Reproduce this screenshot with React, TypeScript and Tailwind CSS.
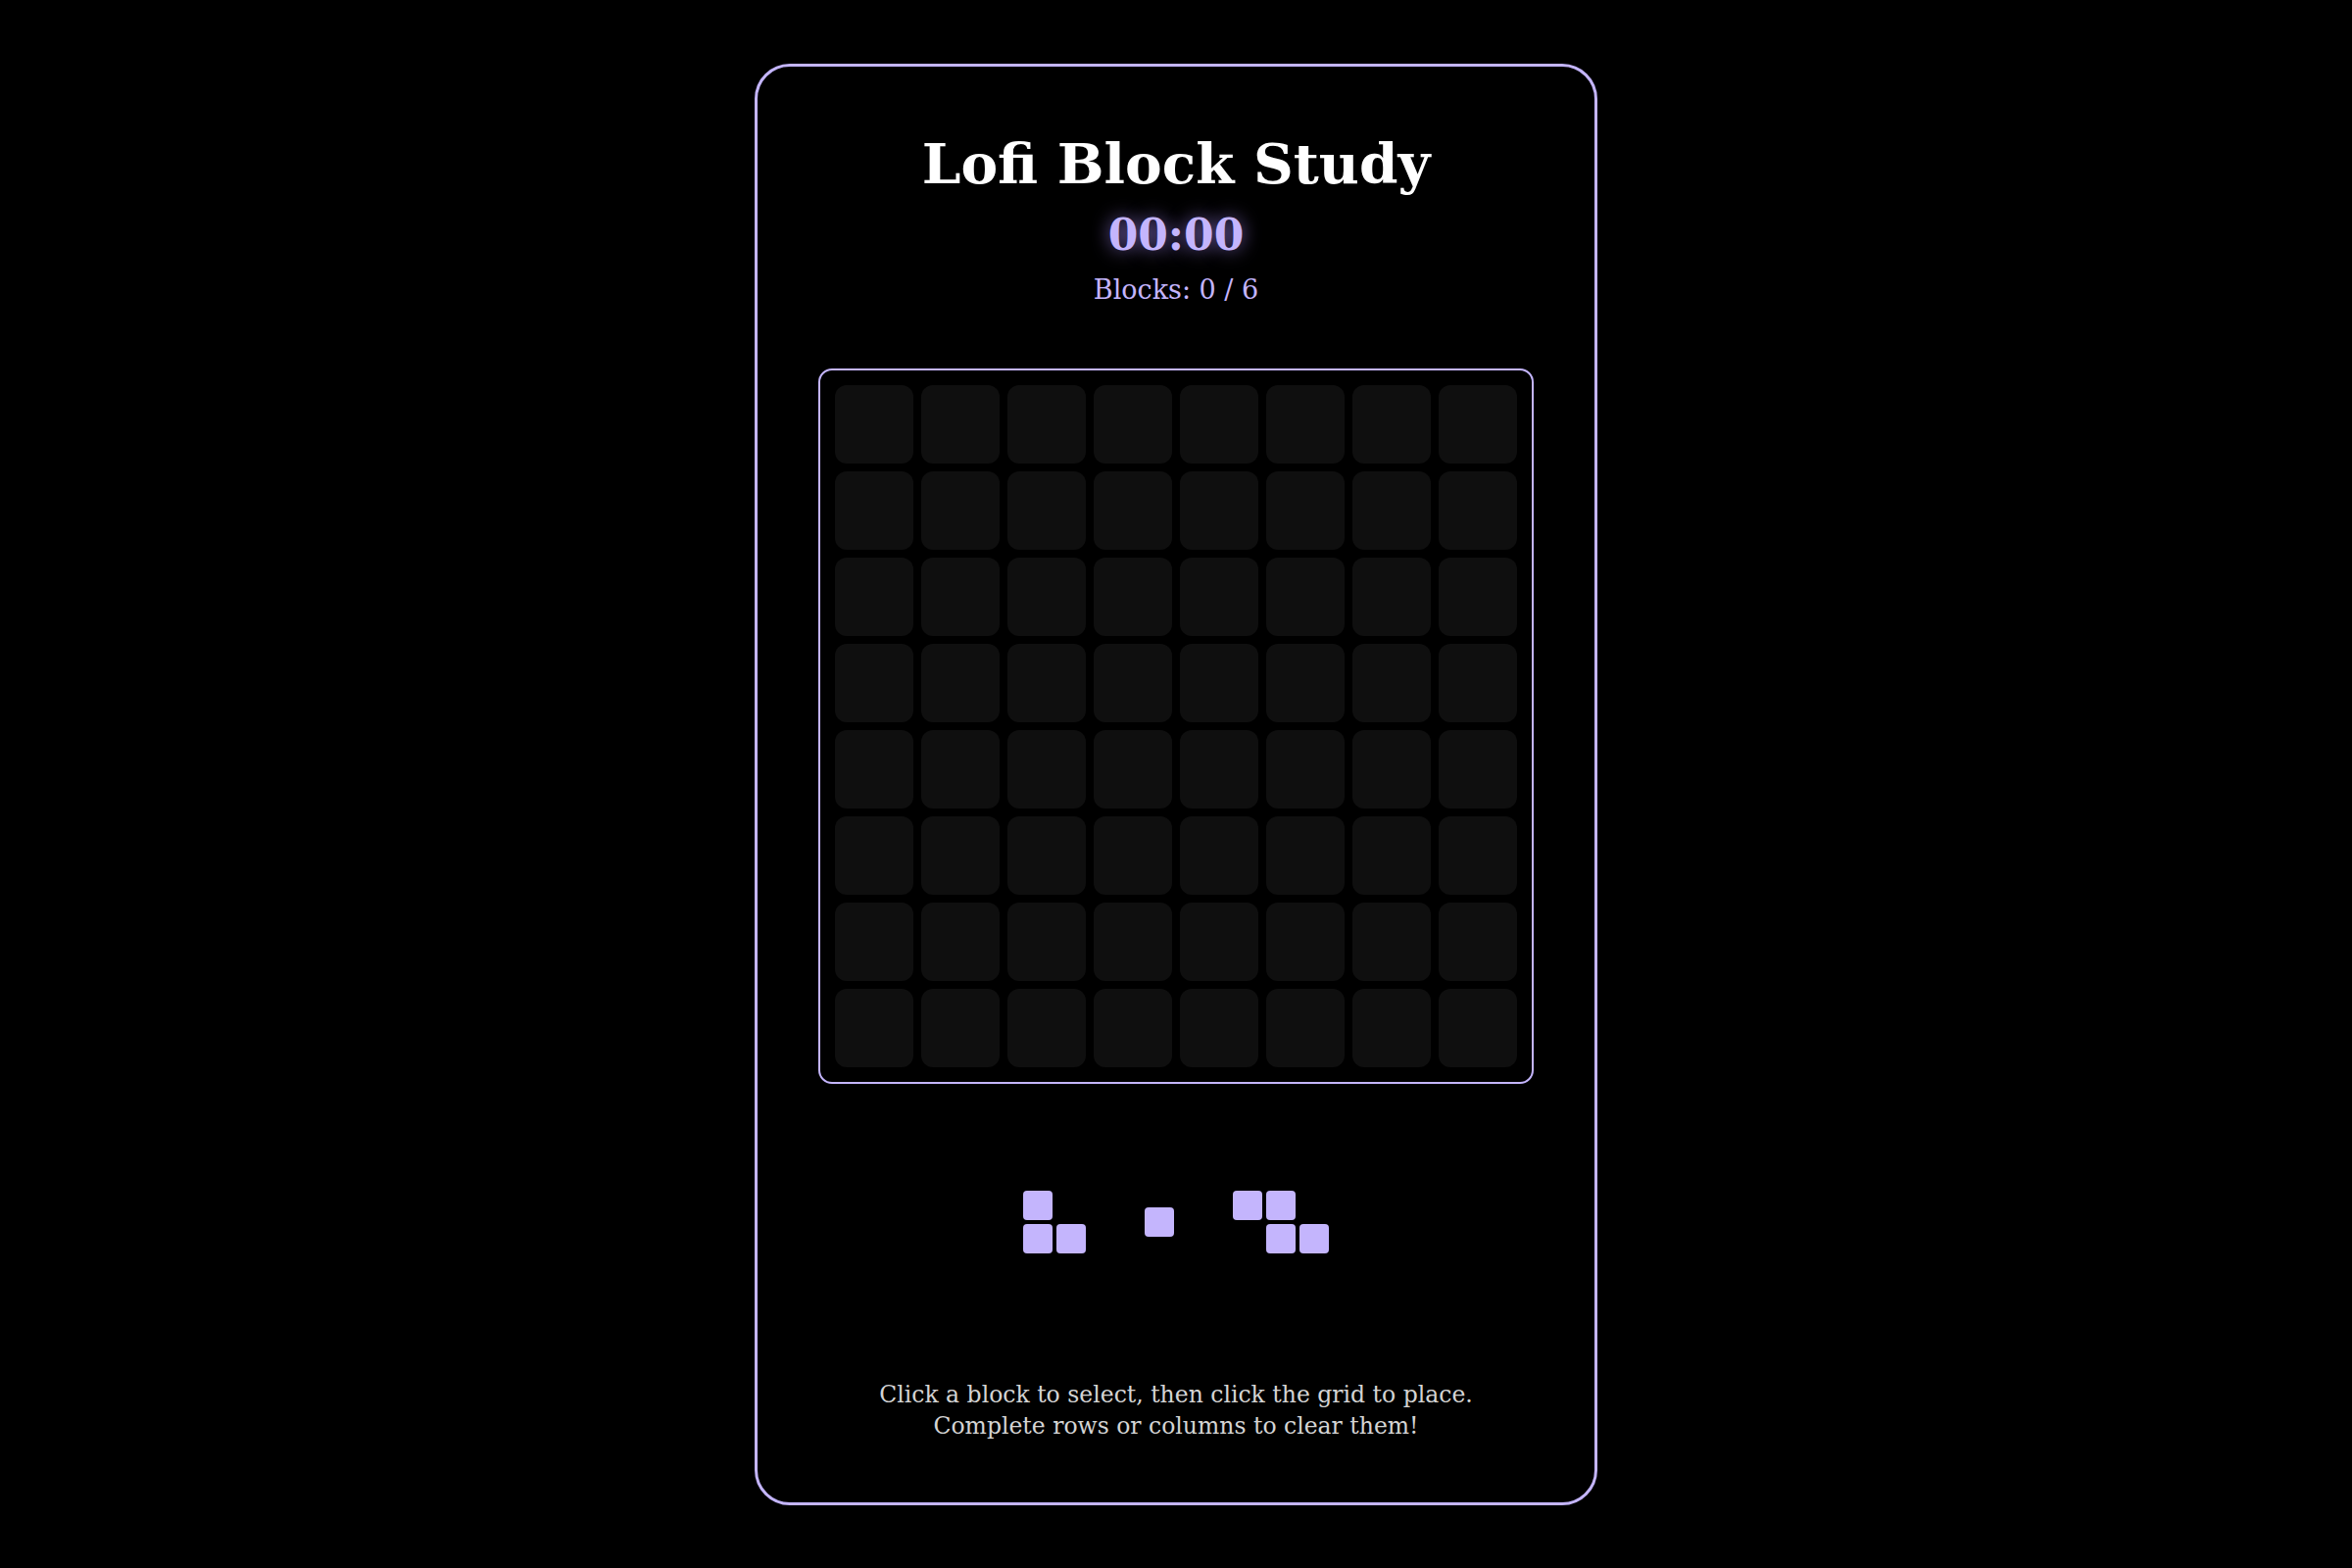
import React from 'react';

const GRID_SIZE = 8;

type Shape = number[][];

const pieces: Shape[] = [
  [
    [1, 0],
    [1, 1],
  ],
  [[1]],
  [
    [1, 1, 0],
    [0, 1, 1],
  ],
];

const PiecePreview = ({ shape }: { shape: Shape }) => (
  <div className="flex flex-col gap-[4px]">
    {shape.map((row, r) => (
      <div key={r} className="flex gap-[4px]">
        {row.map((cell, c) => (
          <div
            key={c}
            className={
              cell
                ? 'w-[30px] h-[30px] rounded-[4px] bg-[#c4b5fd]'
                : 'w-[30px] h-[30px]'
            }
          />
        ))}
      </div>
    ))}
  </div>
);

const App = () => {
  const cells = Array.from({ length: GRID_SIZE * GRID_SIZE });

  return (
    <div
      className="min-h-screen w-full bg-black flex items-center justify-center"
      style={{ fontFamily: '"DejaVu Serif", "Liberation Serif", serif' }}
    >
      <div className="w-[860px] h-[1471px] border-[3px] border-[#c4b5fd] rounded-[36px] flex flex-col items-center pt-[63px]">
        <h1 className="text-[56.5px] leading-[72px] font-bold text-white">Lofi Block Study</h1>
        <div className="mt-[11px] text-[44px] leading-[52px] font-bold text-[#c4b5fd] [text-shadow:0_0_18px_rgba(167,139,250,0.7)]">
          00:00
        </div>
        <p className="mt-[12px] text-[27px] leading-[36px] text-[#c4b5fd]">Blocks: 0 / 6</p>

        {/* board */}
        <div className="mt-[62px] border-2 border-[#c4b5fd] rounded-[14px] p-[15px]">
          <div className="grid grid-cols-8 gap-[8px]">
            {cells.map((_, i) => (
              <div key={i} className="w-[80px] h-[80px] rounded-[12px] bg-[#0f0f0f]" />
            ))}
          </div>
        </div>

        {/* tray */}
        <div className="mt-[109px] flex items-center gap-[60px]">
          {pieces.map((p, i) => (
            <PiecePreview key={i} shape={p} />
          ))}
        </div>

        <p className="mt-[128px] text-[23.5px] leading-[32px] text-[#d4d4d4] text-center">
          Click a block to select, then click the grid to place.
          <br />
          Complete rows or columns to clear them!
        </p>
      </div>
    </div>
  );
};

export default App;
